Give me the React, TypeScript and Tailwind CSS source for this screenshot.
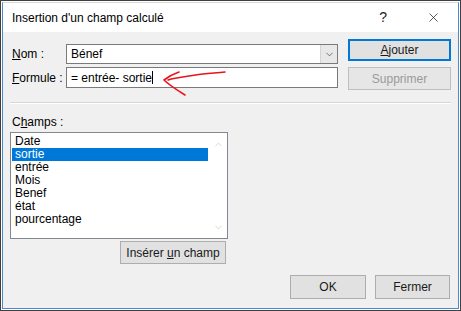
import { ChevronDown, ChevronUp, X } from "lucide-react";

const fields = ["Date", "sortie", "entrée", "Mois", "Benef", "état", "pourcentage"];

const font = { fontFamily: '"Liberation Sans", "Noto Sans", sans-serif' };

function Button({
  children,
  className = "",
  primary = false,
  disabled = false,
}: {
  children: React.ReactNode;
  className?: string;
  primary?: boolean;
  disabled?: boolean;
}) {
  return (
    <div
      className={`flex items-center justify-center bg-[#e1e1e1] text-[12px] ${
        primary ? "border-2 border-[#0078d7]" : "border border-[#adadad]"
      } ${disabled ? "text-[#9a9a9a] border-[#bfbfbf] bg-[#e6e6e6]" : "text-[#1a1a1a]"} ${className}`}
    >
      {children}
    </div>
  );
}

export default function App() {
  return (
    <div
      className="w-[461px] h-[311px] border border-[#404040] bg-white p-px overflow-hidden"
      style={font}
    >
      <div className="flex flex-col h-full border border-[#4a8ac9] border-t-[#d9d9d9]">
        {/* title bar */}
        <div className="h-[29px] shrink-0 bg-white flex items-center pl-[9px] text-[12px] text-black">
          <span>Insertion d'un champ calculé</span>
          <span className="ml-auto mr-[39px] text-[14px] text-[#222]">?</span>
          <X className="mr-[17px] text-[#222]" width={15} height={15} strokeWidth={1.2} />
        </div>

        {/* body */}
        <div className="relative flex-1 bg-[#f0f0f0] px-[6px] text-[12px] text-black">
          <div className="flex pt-[7px]">
            <div className="flex flex-col">
              <div className="flex items-center mt-[5px] h-[20px]">
                <span className="w-[57px] pl-[3px]">
                  <u>N</u>om :
                </span>
                <div className="flex items-center w-[272px] h-[20px] bg-white border border-[#7a7a7a]">
                  <span className="pl-[4px] flex-1">Bénef</span>
                  <div className="w-[17px] h-full flex items-center justify-center bg-[#e8e8e8] border-l border-[#d4d4d4]">
                    <ChevronDown width={11} height={11} strokeWidth={1.4} className="text-[#333]" />
                  </div>
                </div>
              </div>
              <div className="flex items-center mt-[3px] h-[21px]">
                <span className="w-[57px] pl-[3px]">
                  <u>F</u>ormule :
                </span>
                <div className="flex items-center w-[272px] h-[21px] bg-white border border-[#7a7a7a]">
                  <span className="pl-[4px]">= entrée- sortie</span>
                  <span className="w-px h-[13px] bg-black" />
                </div>
              </div>
            </div>
            <div className="flex flex-col gap-[6px] ml-[10px]">
              <Button primary className="w-[103px] h-[22px]">
                <span>
                  <u>A</u>jouter
                </span>
              </Button>
              <Button disabled className="w-[103px] h-[23px]">
                Supprimer
              </Button>
            </div>
          </div>

          <div className="mt-[12px] mx-[1px] border-t border-[#d7d7d7] border-b border-b-white" />

          <div className="mt-[11px] pl-[3px] leading-[14px]">
            C<u>h</u>amps :
          </div>

          <div className="mt-[3px] ml-[1px] w-[218px] h-[107px] bg-white border border-[#828790] flex pt-[1px] pl-[1px]">
            <div className="flex-1 flex flex-col pt-[1px]">
              {fields.map((f) => (
                <div
                  key={f}
                  className={`h-[13px] leading-[13px] pl-[3px] w-[196px] ${
                    f === "sortie" ? "bg-[#0078d7] text-white" : ""
                  }`}
                >
                  {f}
                </div>
              ))}
            </div>
            <div className="w-[18px] flex flex-col justify-between items-center py-[5px] text-[#bdbdbd]">
              <ChevronUp width={11} height={11} strokeWidth={1.3} />
              <ChevronDown width={11} height={11} strokeWidth={1.3} />
            </div>
          </div>

          <div className="flex justify-start pl-[111px] mt-[2px]">
            <Button className="w-[106px] h-[23px]">
              <span>
                Insérer <u>u</u>n champ
              </span>
            </Button>
          </div>

          <div className="flex justify-end gap-[9px] mt-[11px] pr-[2px]">
            <Button className="w-[76px] h-[24px]">OK</Button>
            <Button className="w-[75px] h-[24px]">Fermer</Button>
          </div>

          {/* hand drawn red arrow */}
          <svg
            className="absolute left-[156px] top-[36px]"
            width="72"
            height="34"
            viewBox="0 0 72 34"
            fill="none"
            stroke="#e8141c"
            strokeWidth="1.6"
            strokeLinecap="round"
            strokeLinejoin="round"
          >
            <path d="M20 4 C14 6 9 9 5 12 C10 17 18 22 26 27" />
            <path d="M9 12 C14 10 18 10 24 9 C30 8 36 7 44 6 C52 5 58 5 66 4" />
          </svg>
        </div>
      </div>
    </div>
  );
}
